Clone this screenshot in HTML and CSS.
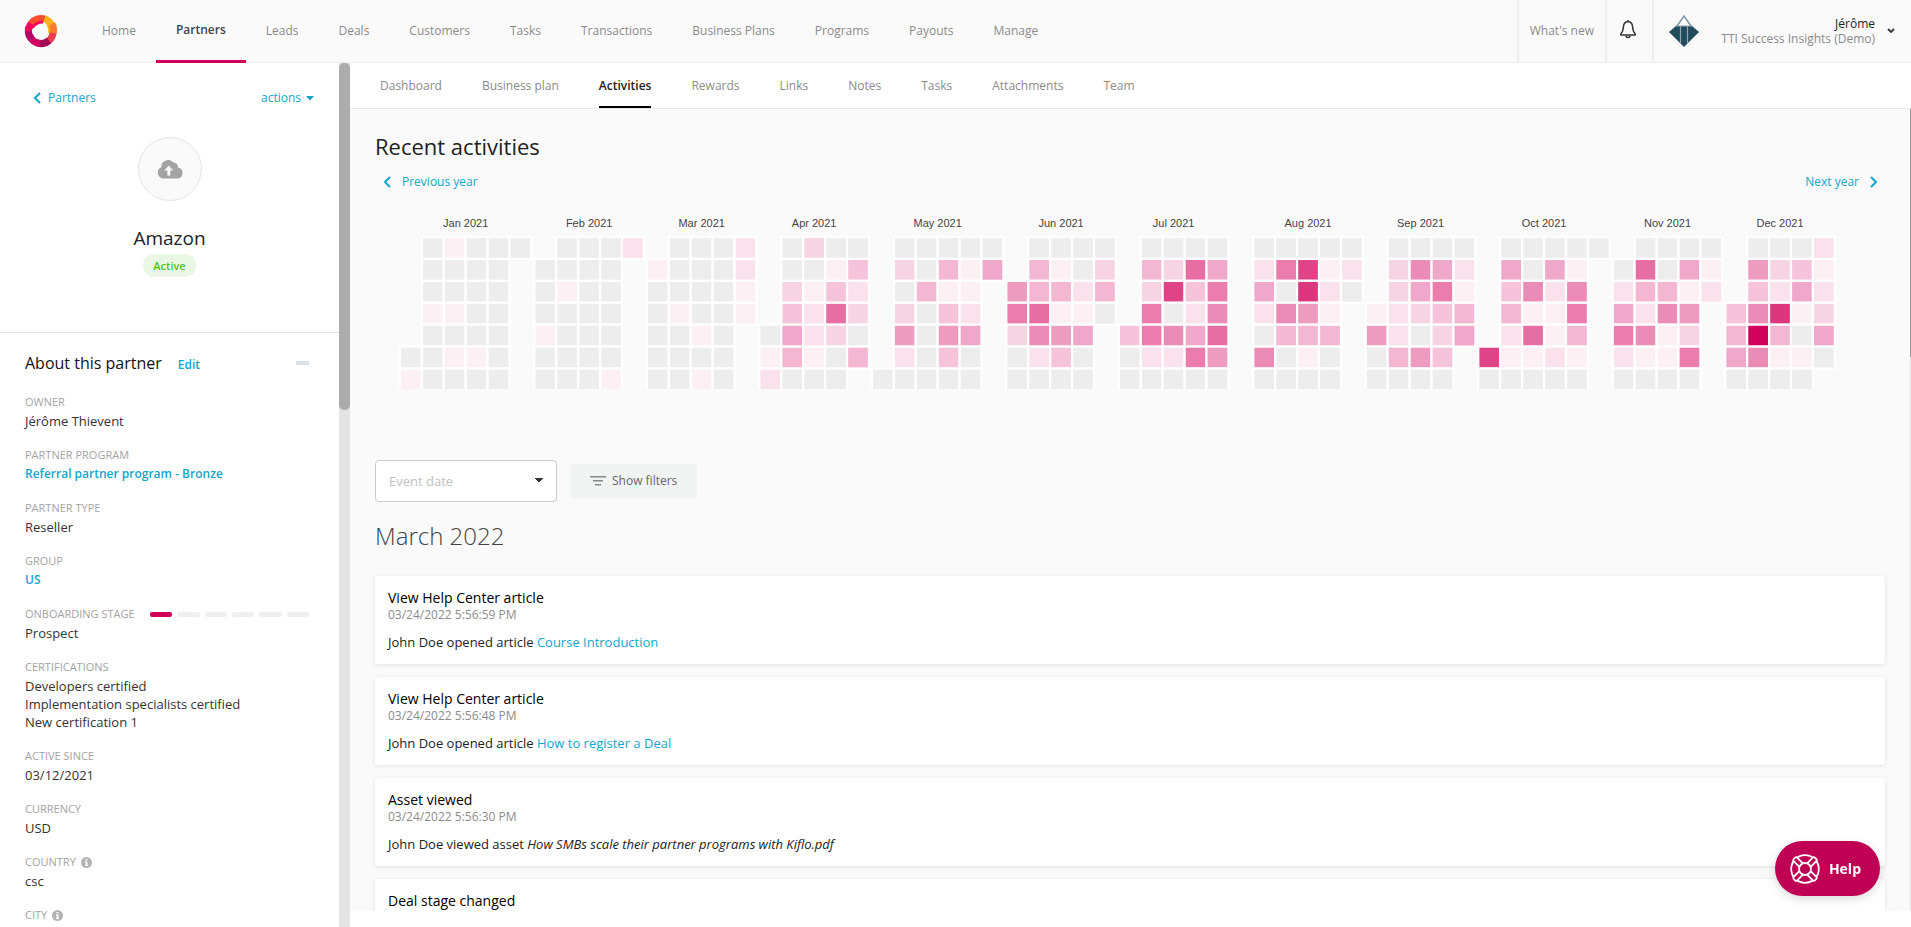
FILE: index.html
```html
<!DOCTYPE html>
<html lang="en">
<head>
<meta charset="utf-8">
<title>Amazon - Activities</title>
<link rel="stylesheet" href="styles.css">
</head>
<body>
<header class="topbar">
  <a class="logo" href="#" aria-label="Home page">
    <svg width="34" height="34" viewBox="0 0 34 34" fill="none" stroke-width="7">
      <path d="M19 4.500A12.500 12.500 0 0 1 29 14" stroke="#fcb21c"/>
      <path d="M28 10A12.500 12.500 0 0 1 28.500 21" stroke="#fa7a35"/>
      <path d="M29 19A12.500 12.500 0 0 1 21 29" stroke="#e83e50"/>
      <path d="M25 26.500A12.500 12.500 0 0 1 12 28.500" stroke="#a30b58"/>
      <path d="M16 29.500A12.500 12.500 0 0 1 5.500 21" stroke="#cf0060"/>
      <path d="M7.500 25A12.500 12.500 0 0 1 5 13" stroke="#b5006a"/>
      <path d="M4.500 17A12.500 12.500 0 0 1 11 6.500" stroke="#f5075e"/>
      <path d="M7 9.500A12.500 12.500 0 0 1 20.500 5" stroke="#f8502f"/>
      <path d="M8 14q4-6 11-6" stroke="#f5075e" stroke-width="3"/>
      <path d="M22 8q4 5 3 11" stroke="#fcb21c" stroke-width="2"/>
    </svg>
  </a>
  <nav class="mainnav">
    <a href="#">Home</a>
    <a href="#" class="active">Partners</a>
    <a href="#">Leads</a>
    <a href="#">Deals</a>
    <a href="#">Customers</a>
    <a href="#">Tasks</a>
    <a href="#">Transactions</a>
    <a href="#">Business Plans</a>
    <a href="#">Programs</a>
    <a href="#">Payouts</a>
    <a href="#">Manage</a>
  </nav>
  <a class="whatsnew" href="#">What's new</a>
  <button class="bell" type="button" aria-label="Notifications">
    <svg width="18" height="20" viewBox="0 0 18 20" fill="none" stroke="#333" stroke-width="1.500" stroke-linejoin="round">
      <path d="M9 1v2M9 2.800C6 2.800 4.600 5 4.400 8c-.2 3.500-.6 5-2.600 6.700v1.300h14.400v-1.300c-2-1.700-2.400-3.200-2.600-6.700C13.400 5 12 2.800 9 2.800z"/>
      <path d="M7 16.500c0 2.600 4 2.600 4 0"/>
    </svg>
  </button>
  <button class="account" type="button">
    <svg width="32" height="34" viewBox="0 0 32 34">
      <path d="M9 12L16 2l7 10" fill="#fff" stroke="#7d97a3" stroke-width="1.500"/>
      <path d="M8 12h16l7 6-15 15L1 18z" fill="#234b5e"/>
      <path d="M7 12h18M12.500 12v17M19.500 12v17" stroke="#8fa5af" stroke-width="1.200"/>
    </svg>
    <span class="who"><span class="name">Jérôme</span><span class="org">TTI Success Insights (Demo)</span></span>
    <svg width="8" height="6" viewBox="0 0 8 6" fill="none" stroke="#333" stroke-width="1.800"><path d="M1 1l3 3 3-3"/></svg>
  </button>
</header>
<div class="body">
  <aside class="side">
    <div class="sidescroll">
      <section class="profile">
        <div class="sidehead">
          <a class="back" href="#"><svg width="8" height="12" viewBox="0 0 8 12" fill="none" stroke="currentColor" stroke-width="2"><path d="M7 1L2 6l5 5"/></svg>Partners</a>
          <button class="actions" type="button">actions<svg width="8" height="5" viewBox="0 0 8 5" fill="currentColor"><path d="M0 0h8L4 4.500z"/></svg></button>
        </div>
        <button class="avatar" type="button" aria-label="Upload logo">
          <svg width="26" height="19" viewBox="0 0 26 19"><path d="M21 7.600A5 5 0 0 0 16.500 2.500 7 7 0 0 0 4.200 7.200 6 6 0 0 0 6 18.500h14.500a5.500 5.500 0 0 0 .5-10.900z" fill="#a3a3a3"/><path d="M11.800 5.500l4.400 5h-3v5h-2.800v-5h-3z" fill="#fff"/></svg>
        </button>
        <h1>Amazon</h1>
        <span class="pill">Active</span>
      </section>
      <section class="about">
        <div class="abouthead"><h2>About this partner</h2><a href="#">Edit</a><button class="collapse" type="button" aria-label="Collapse"></button></div>
        <dl>
          <div><dt>OWNER</dt><dd>Jérôme Thievent</dd></div>
          <div><dt>PARTNER PROGRAM</dt><dd><a href="#">Referral partner program - Bronze</a></dd></div>
          <div><dt>PARTNER TYPE</dt><dd>Reseller</dd></div>
          <div><dt>GROUP</dt><dd><a href="#">US</a></dd></div>
          <div><dt>ONBOARDING STAGE<span class="steps"><i class="done"></i><i></i><i></i><i></i><i></i><i></i></span></dt><dd>Prospect</dd></div>
          <div><dt>CERTIFICATIONS</dt><dd>Developers certified</dd><dd>Implementation specialists certified</dd><dd>New certification 1</dd></div>
          <div><dt>ACTIVE SINCE</dt><dd>03/12/2021</dd></div>
          <div><dt>CURRENCY</dt><dd>USD</dd></div>
          <div><dt>COUNTRY<svg class="info" width="11" height="11" viewBox="0 0 11 11"><circle cx="5.500" cy="5.500" r="5.500" fill="#b3b3b3"/><path d="M4.600 2h1.800v1.600H4.600zM4 4.600h2.400v3.200h.8V9H4V7.800h.7v-2H4z" fill="#fff"/></svg></dt><dd>csc</dd></div>
          <div><dt>CITY<svg class="info" width="11" height="11" viewBox="0 0 11 11"><circle cx="5.500" cy="5.500" r="5.500" fill="#b3b3b3"/><path d="M4.600 2h1.800v1.600H4.600zM4 4.600h2.400v3.200h.8V9H4V7.800h.7v-2H4z" fill="#fff"/></svg></dt><dd>&nbsp;</dd></div>
        </dl>
      </section>
    </div>
    <div class="track"><div class="thumb"></div></div>
  </aside>
  <main class="main">
    <nav class="tabs">
      <a href="#">Dashboard</a>
      <a href="#">Business plan</a>
      <a href="#" class="active">Activities</a>
      <a href="#">Rewards</a>
      <a href="#">Links</a>
      <a href="#">Notes</a>
      <a href="#">Tasks</a>
      <a href="#">Attachments</a>
      <a href="#">Team</a>
    </nav>
    <div class="pane">
      <div class="content">
        <h2 class="title">Recent activities</h2>
        <div class="years">
          <a href="#"><svg width="8" height="12" viewBox="0 0 8 12" fill="none" stroke="currentColor" stroke-width="2"><path d="M7 1L2 6l5 5"/></svg>Previous year</a>
          <a href="#">Next year<svg width="8" height="12" viewBox="0 0 8 12" fill="none" stroke="currentColor" stroke-width="2"><path d="M1 1l5 5-5 5"/></svg></a>
        </div>
        <svg class="heatmap" id="heatmap" viewBox="0 0 1510 180" role="img" aria-label="Activities per day in 2021"></svg>
        <div class="filters">
          <select class="date" aria-label="Event date"><option>Event date</option></select>
          <button class="show" type="button"><svg width="16" height="10" viewBox="0 0 16 10" fill="#8a8a8a"><path d="M0 0h16v1.500H0zM3 4h10v1.500H3zM5 8h6v1.500H5z"/></svg>Show filters</button>
        </div>
        <h3 class="month">March 2022</h3>
        <article class="card"><h4>View Help Center article</h4><time>03/24/2022 5:56:59 PM</time><p>John Doe opened article <a href="#">Course Introduction</a></p></article>
        <article class="card"><h4>View Help Center article</h4><time>03/24/2022 5:56:48 PM</time><p>John Doe opened article <a href="#">How to register a Deal</a></p></article>
        <article class="card"><h4>Asset viewed</h4><time>03/24/2022 5:56:30 PM</time><p>John Doe viewed asset <em>How SMBs scale their partner programs with Kiflo.pdf</em></p></article>
        <article class="card"><h4>Deal stage changed</h4></article>
      </div>
      <div class="edge"><div class="edgethumb"></div></div>
    </div>
  </main>
</div>
<button class="help" type="button">
  <svg width="32" height="32" viewBox="-16 -16 32 32" fill="#bf0055" stroke="#fff" stroke-width="1.800">
    <circle r="13.800"/>
    <g transform="rotate(45)">
      <rect x="4" y="-2.500" width="11" height="5" rx="1.500"/>
      <rect x="-15" y="-2.500" width="11" height="5" rx="1.500"/>
      <rect x="-2.500" y="4" width="5" height="11" rx="1.500"/>
      <rect x="-2.500" y="-15" width="5" height="11" rx="1.500"/>
    </g>
    <circle r="6"/>
  </svg>
  Help
</button>
<script src="heatmap.js"></script>
</body>
</html>
```
FILE: heatmap.js
```js
// One string per weekday (Sunday first), one character per week; "." is a day outside the month.
var months = [
  ["Jan 2021", 0, [".01000", ".0000.", ".0000.", ".1100.", ".0000.", "00110.", "10000."]],
  ["Feb 2021", 5, [".0002", "0000.", "0100.", "0000.", "1000.", "0000.", "0001."]],
  ["Mar 2021", 9, [".0002", "10002", "00001", "01001", "0010.", "0000.", "0010."]],
  ["Apr 2021", 13, [".0300", ".0014", ".3142", ".42A3", "06230", "15105", "2000."]],
  ["May 2021", 17, [".00000", ".30516", ".0511.", ".3042.", ".7076.", ".2040.", "00000."]],
  ["Jun 2021", 22, [".0000", ".5103", "75525", "9A110", "3876.", "0240.", "0000."]],
  ["Jul 2021", 26, [".0000", ".53A6", ".3D49", ".9028", "4986A", "02297", "00000"]],
  ["Aug 2021", 31, ["00000", "29D12", "60E20", "2871.", "0555.", "8010.", "0000."]],
  ["Sep 2021", 35, [".0000", ".3862", ".3691", "12345", "72036", "0574.", "0000."]],
  ["Oct 2021", 39, [".00000", ".6061.", ".4828.", ".5119.", ".2A15.", "D1121.", "00000."]],
  ["Nov 2021", 44, [".0000", "0A061", "25512", "6287.", "9813.", "2119.", "0000."]],
  ["Dec 2021", 48, [".0002", ".7341", ".4262", "48E13", "5F506", "68110", "0000."]]
];
var colors = {
  0: "#ededed", 1: "#fdf0f4", 2: "#fae2ec", 3: "#f7d4e4", 4: "#f5c4da", 5: "#f3b7d1", 6: "#efa8c9",
  7: "#ee9bc0", 8: "#ea8cb5", 9: "#eb7dad", A: "#e66ea3", D: "#df4486", E: "#dc367c", F: "#d1005b"
};
var NS = "http://www.w3.org/2000/svg";
var svg = document.getElementById("heatmap");
var pitch = 21.92, left = 24.9, top0 = 28;

function add(name, attrs, text) {
  var el = document.createElementNS(NS, name);
  for (var key in attrs) el.setAttribute(key, attrs[key]);
  if (text) el.textContent = text;
  svg.appendChild(el);
}

months.forEach(function (month, index) {
  var x0 = left + (month[1] + index * 1.133) * pitch;
  var columns = month[2][0].length;
  add("text", { x: x0 + columns * pitch / 2, y: 18, "class": "monthname" }, month[0]);
  month[2].forEach(function (row, day) {
    row.split("").forEach(function (level, week) {
      if (level === ".") return;
      add("rect", {
        x: x0 + week * pitch, y: top0 + day * pitch, width: pitch, height: pitch,
        fill: colors[level], "class": "day"
      });
    });
  });
});
```
FILE: styles.css
```css
* { box-sizing: border-box; }
body { margin: 0; height: 100vh; display: flex; flex-direction: column; overflow: hidden; background: #fff; color: #333; font: 12px/18px "Open Sans", "Noto Sans", sans-serif; }
a { color: #14a5ca; text-decoration: none; }
button { border: 0; padding: 0; background: none; font: inherit; color: inherit; cursor: pointer; }
h1, h2, h3, h4, p, dl, dd { margin: 0; font-weight: 400; }
svg { flex: none; }

.topbar { display: flex; flex: none; height: 63px; background: #fafafa; border-bottom: 1px solid #eee; }
.logo { display: flex; align-items: center; padding: 0 24px; }
.mainnav { display: flex; flex: 1; margin-bottom: -1px; }
.mainnav a { display: flex; align-items: center; padding: 2px 20px 0; color: #8b8b8b; border-bottom: 3px solid transparent; }
.mainnav a.active { color: #444; border-color: #d1005b; padding-top: 0; font-weight: 600; }
.whatsnew { display: flex; align-items: center; padding: 0 11px; border-left: 2px solid #eee; color: #8b8b8b; }
.bell { display: flex; align-items: center; justify-content: center; width: 47px; padding: 0 4px 4px 0; border-left: 2px solid #eee; }
.account { display: flex; align-items: center; gap: 12px; width: 259px; padding: 0 16px 0 14px; border-left: 2px solid #eee; text-align: right; }
.who { display: flex; flex: 1; flex-direction: column; line-height: 15px; }
.name { color: #222; }
.org { color: #8b8b8b; }

.body { display: flex; flex: 1; min-height: 0; }
.side { display: flex; flex: none; width: 350px; }
.sidescroll { flex: 1; overflow: hidden; }
.track { width: 11px; background: #e4e4e4; }
.thumb { height: 347px; border-radius: 5px; background: #acacac; }
.profile { display: flex; flex-direction: column; align-items: center; height: 270px; padding: 26px 25px 0; border-bottom: 1px solid #e8e8e8; }
.sidehead { display: flex; justify-content: space-between; align-self: stretch; padding-left: 8px; }
.back, .actions { display: flex; align-items: center; color: #14a5ca; }
.back { gap: 7px; }
.actions { gap: 5px; }
.avatar { display: flex; align-items: center; justify-content: center; width: 64px; height: 64px; margin-top: 30px; border: 1px solid #e4e4e4; border-radius: 50%; background: #fafafa; }
.profile h1 { margin-top: 23px; font-size: 19px; line-height: 28px; color: #222; }
.pill { margin-top: 2px; padding: 0 10px; border-radius: 12px; background: #eaf7e4; color: #52c41a; font-size: 11px; line-height: 23px; font-weight: 600; }
.about { padding: 18px 30px 0 25px; }
.abouthead { display: flex; align-items: baseline; margin-bottom: 17px; }
.about h2 { font-size: 16px; line-height: 24px; color: #111; }
.abouthead a { margin-left: 16px; font-weight: 600; }
.collapse { align-self: center; width: 13px; height: 4px; margin-left: auto; background: #d9e0e6; }
.about dl > div { margin-bottom: 15px; }
.about dt { display: flex; align-items: center; color: #a3a3a3; font-size: 11px; line-height: 20px; }
.about dd { font-size: 13px; line-height: 18px; }
.about dd a { display: block; font-size: 12px; font-weight: 600; }
.steps { display: flex; gap: 5px; width: 159px; margin-left: auto; }
.steps i { flex: 1; height: 5px; border-radius: 2px; background: #efefef; }
.steps .done { background: #d1005b; }
.info { margin-left: 5px; }

.main { display: flex; flex-direction: column; flex: 1; min-width: 0; padding-bottom: 16px; }
.tabs { display: flex; flex: none; gap: 40px; height: 46px; padding: 0 30px; border-bottom: 1px solid #e8e8e8; }
.tabs a { display: flex; align-items: center; padding-top: 2px; color: #8b8b8b; border-bottom: 2px solid transparent; }
.tabs a.active { color: #222; border-color: #000; font-weight: 600; }
.pane { display: flex; flex: 1; min-height: 0; background: #fafafa; }
.content { flex: 1; min-width: 0; overflow: hidden; padding: 22px 25px 0; }
.edge { width: 1px; background: #e4e4e4; }
.edgethumb { height: 248px; background: #999; }
.title { font-size: 22px; line-height: 30px; color: #222; }
.years { display: flex; justify-content: space-between; margin-top: 12px; padding: 0 7px 0 8px; }
.years a { display: flex; align-items: center; gap: 11px; }
.heatmap { display: block; width: 100%; margin-top: 18px; }
.monthname { font: 11px "Liberation Sans", Arial, sans-serif; fill: #444; text-anchor: middle; }
.day { stroke: #fff; stroke-width: 2.200px; }
.filters { display: flex; align-items: center; gap: 13px; margin-top: 71px; }
.date { width: 182px; height: 42px; padding: 0 13px; border: 1px solid #ccc; border-radius: 4px; color: #bfbfbf; font: inherit; font-size: 13px; appearance: none; background: linear-gradient(to bottom right, #333 50%, transparent 50%) 163px 17px / 4px 5px no-repeat, linear-gradient(to bottom left, #333 50%, transparent 50%) 159px 17px / 4px 5px no-repeat, #fff; }
.show { display: flex; align-items: center; gap: 6px; height: 35px; padding: 0 20px; border-radius: 4px; background: #f1f4f3; color: #666; }
.month { margin: 18px 0 24px; font-size: 24px; line-height: 32px; font-weight: 300; color: #444; }
.card { display: flex; flex-direction: column; height: 88px; margin-bottom: 13px; padding: 13px 13px 0; border-radius: 3px; background: #fff; box-shadow: 0 1px 4px rgba(0, 0, 0, .1); }
.card h4 { color: #000; font-size: 14px; line-height: 18px; }
.card time { color: #8b8b8b; font-size: 12px; line-height: 15px; }
.card p { margin-top: 11px; color: #222; font-size: 13px; line-height: 18px; }
.help { position: fixed; right: 31px; bottom: 31px; display: flex; align-items: center; gap: 8px; height: 55px; padding: 0 19px 0 14px; border-radius: 28px; background: #bf0055; color: #fff; font-size: 14px; font-weight: 700; box-shadow: 0 3px 10px rgba(0, 0, 0, .15); }
```
